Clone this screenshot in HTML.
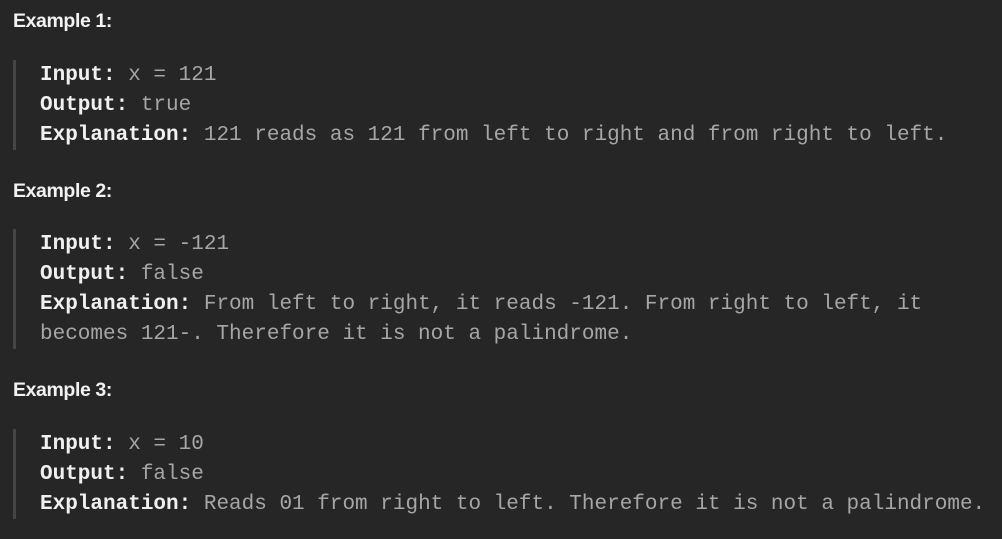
<!DOCTYPE html>
<html><head><style>
body{margin:0;background:#262626;width:1002px;height:539px;overflow:hidden;position:relative}
.h{position:absolute;left:13px;font:bold 19.5px "Liberation Sans",sans-serif;letter-spacing:-0.4px;color:#f2f2f2;line-height:22px}
.l{position:absolute;left:40px;font:21px "Liberation Mono",monospace;letter-spacing:0;color:#a6a6a6;line-height:30px;white-space:pre}
.l b{color:#f0f0f0}
.bar{position:absolute;left:13px;width:3px;background:#454545}
</style></head><body>
<div class="h" style="top:10px">Example 1:</div>
<div class="bar" style="top:60px;height:90px"></div>
<div class="l" style="top:61px"><b>Input:</b> x = 121</div>
<div class="l" style="top:91px"><b>Output:</b> true</div>
<div class="l" style="top:121px"><b>Explanation:</b> 121 reads as 121 from left to right and from right to left.</div>
<div class="h" style="top:180px">Example 2:</div>
<div class="bar" style="top:229px;height:120px"></div>
<div class="l" style="top:230px"><b>Input:</b> x = -121</div>
<div class="l" style="top:260px"><b>Output:</b> false</div>
<div class="l" style="top:290px"><b>Explanation:</b> From left to right, it reads -121. From right to left, it</div>
<div class="l" style="top:320px">becomes 121-. Therefore it is not a palindrome.</div>
<div class="h" style="top:379px">Example 3:</div>
<div class="bar" style="top:429px;height:90px"></div>
<div class="l" style="top:430px"><b>Input:</b> x = 10</div>
<div class="l" style="top:460px"><b>Output:</b> false</div>
<div class="l" style="top:490px"><b>Explanation:</b> Reads 01 from right to left. Therefore it is not a palindrome.</div>
</body></html>
